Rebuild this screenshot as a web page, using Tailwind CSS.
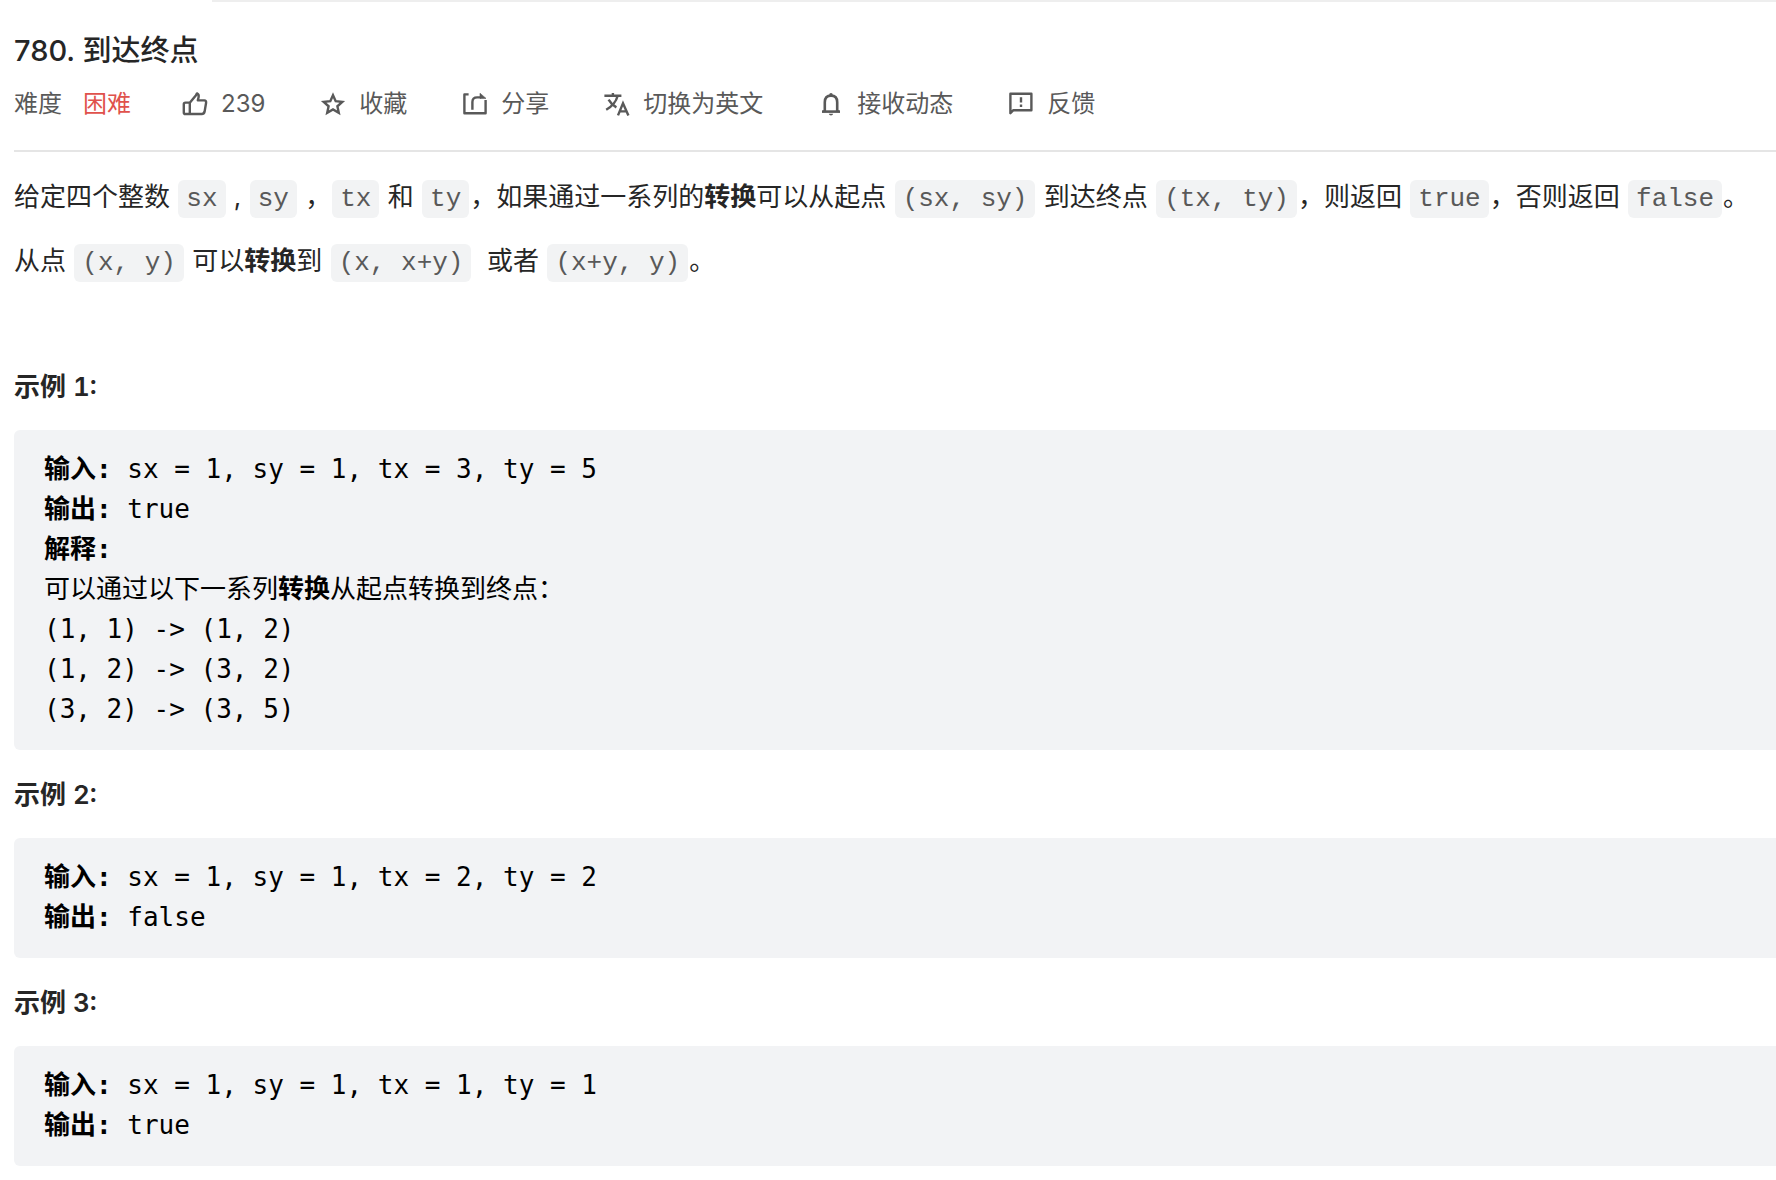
<!DOCTYPE html>
<html lang="zh-CN">
<head>
    <meta charset="UTF-8">
    <meta name="viewport" content="width=device-width, initial-scale=1.0">
    <title>780. 到达终点</title>
    <script src="https://cdn.jsdelivr.net/npm/@tailwindcss/browser@4"></script>
</head>
<body class="bg-white text-[#262626] font-[Inter,'Noto_Sans_CJK_SC',sans-serif]">
    <!-- Tab bar edge -->
    <div class="ml-[212px] h-0.5 bg-[#eeeeee]"></div>

    <main class="pl-3.5 pt-[31px]">
        <header class="border-b-2 border-[#e5e5e5] pb-8">
            <h1 class="text-[29px] leading-9 font-medium mb-[21px]">780. 到达终点</h1>

            <div class="flex items-center gap-[50px] text-2xl leading-7 text-[#595959] whitespace-nowrap">
                <div class="flex gap-[21px]">
                    <span>难度</span>
                    <span class="text-[#e0524c]">困难</span>
                </div>
                <div class="flex items-center gap-[54px]">
                    <button type="button" class="flex items-center gap-3">
                        <svg class="size-7" viewBox="0 0 28 28" fill="none" stroke="currentColor" stroke-width="2.4" stroke-linejoin="round">
                            <path d="M9 12.6 L15 5.2 L16 3.4 Q18.2 4.6 17.6 7.2 L16.8 10.4 H23.2 Q25.4 10.6 25.1 12.8 L23.6 21.6 Q23 24 20.8 24 H4.4 Q2.8 24 2.8 22.4 V14.2 Q2.8 12.6 4.4 12.6 Z"/>
                            <path d="M8.8 12.6 V24"/>
                        </svg>
                        <span>239</span>
                    </button>
                    <button type="button" class="flex items-center gap-3">
                        <svg class="size-7" viewBox="0 0 28 28" fill="none" stroke="currentColor" stroke-width="2.4" stroke-linejoin="miter">
                            <path d="M14 5.2 L16.7 11.2 L23.3 11.9 L18.4 16.3 L19.8 22.8 L14 19.5 L8.2 22.8 L9.6 16.3 L4.7 11.9 L11.3 11.2 Z"/>
                        </svg>
                        <span>收藏</span>
                    </button>
                    <button type="button" class="flex items-center gap-3">
                        <svg class="size-7" viewBox="0 0 28 28" fill="none" stroke="currentColor" stroke-width="2.4" stroke-linejoin="round">
                            <path d="M7.6 4.4 H3.4 V23.2 H24.6 V10"/>
                            <path d="M11.4 19.8 V12 Q11.4 7.4 16.2 7.4 H20"/>
                            <path d="M19 3.2 L25 8.4 H19 Z" fill="currentColor" stroke-width="0.6"/>
                        </svg>
                        <span>分享</span>
                    </button>
                    <button type="button" class="flex items-center gap-3">
                        <svg class="size-7" viewBox="0 0 28 28" fill="none" stroke="currentColor" stroke-width="2.4">
                            <path d="M1.4 5.8 H18.4 M9.9 3 V6"/>
                            <path d="M14.6 6 Q12.4 14.4 3.2 19.8 M5.6 9.6 Q8.4 14.6 13.4 17.4"/>
                            <path d="M15 25.4 L20 13.2 L25.4 25.4 M16.6 21.4 H23.8"/>
                        </svg>
                        <span>切换为英文</span>
                    </button>
                    <button type="button" class="flex items-center gap-3">
                        <svg class="size-7" viewBox="0 0 28 28" fill="none" stroke="currentColor" stroke-width="2.6">
                            <path d="M5 21.6 H23"/>
                            <path d="M7.8 21.4 V12.2 Q7.8 5.6 14 5.6 Q20.2 5.6 20.2 12.2 V21.4"/>
                            <path d="M5 22.6 L8 18.6 V22 Z M23 22.6 L20 18.6 V22 Z M12.2 5.2 Q12.2 3 14 3 Q15.8 3 15.8 5.2 Z M11.8 23.8 H16.2 Q15.8 25.4 14 25.4 Q12.2 25.4 11.8 23.8 Z" fill="currentColor" stroke="none"/>
                        </svg>
                        <span>接收动态</span>
                    </button>
                    <button type="button" class="flex items-center gap-3">
                        <svg class="size-7" viewBox="0 0 28 28" fill="none" stroke="currentColor" stroke-width="2.4" stroke-linejoin="round">
                            <path d="M3.4 23.2 V3.7 H24.4 V20.2 H6.4 Z"/>
                            <path d="M14 7.2 V12.4 M14 14.6 V17"/>
                        </svg>
                        <span>反馈</span>
                    </button>
                </div>
            </div>
        </header>

        <article class="pt-[26px] flex flex-col gap-[26px] text-[26px] leading-[34px]">
            <p class="pt-0.5">给定四个整数 <code class="mx-px px-2 py-1 rounded-md bg-[#f2f3f4] text-[#595959] font-['Liberation_Mono',monospace]">sx</code> , <code class="mx-px px-2 py-1 rounded-md bg-[#f2f3f4] text-[#595959] font-['Liberation_Mono',monospace]">sy</code> ，<code class="mx-px px-2 py-1 rounded-md bg-[#f2f3f4] text-[#595959] font-['Liberation_Mono',monospace]">tx</code> 和 <code class="mx-px px-2 py-1 rounded-md bg-[#f2f3f4] text-[#595959] font-['Liberation_Mono',monospace]">ty</code>，如果通过一系列的<strong>转换</strong>可以从起点 <code class="mx-px px-2 py-1 rounded-md bg-[#f2f3f4] text-[#595959] font-['Liberation_Mono',monospace]">(sx, sy)</code> 到达终点 <code class="mx-px px-2 py-1 rounded-md bg-[#f2f3f4] text-[#595959] font-['Liberation_Mono',monospace]">(tx, ty)</code>，则返回 <code class="mx-px px-2 py-1 rounded-md bg-[#f2f3f4] text-[#595959] font-['Liberation_Mono',monospace]">true</code>，否则返回 <code class="mx-px px-2 py-1 rounded-md bg-[#f2f3f4] text-[#595959] font-['Liberation_Mono',monospace]">false</code>。</p>
            <p class="pt-0.5">从点 <code class="mx-px px-2 py-1 rounded-md bg-[#f2f3f4] text-[#595959] font-['Liberation_Mono',monospace]">(x, y)</code> 可以<strong>转换</strong>到 <code class="mx-px px-2 py-1 rounded-md bg-[#f2f3f4] text-[#595959] font-['Liberation_Mono',monospace]">(x, x+y)</code>&nbsp; 或者 <code class="mx-px px-2 py-1 rounded-md bg-[#f2f3f4] text-[#595959] font-['Liberation_Mono',monospace]">(x+y, y)</code>。</p>
            <p class="pt-0.5">&nbsp;</p>

            <p class="pt-0.5 font-semibold tabular-nums">示例 1:</p>
            <pre class="bg-[#f2f3f5] text-black rounded-l-md px-[30px] pt-[19px] pb-[21px] leading-10 font-['DejaVu_Sans_Mono','Noto_Sans_CJK_SC',monospace]"><strong>输入:</strong> sx = 1, sy = 1, tx = 3, ty = 5
<strong>输出:</strong> true
<strong>解释:</strong>
可以通过以下一系列<strong>转换</strong>从起点转换到终点：
(1, 1) -&gt; (1, 2)
(1, 2) -&gt; (3, 2)
(3, 2) -&gt; (3, 5)
</pre>

            <p class="pt-0.5 font-semibold tabular-nums">示例 2:</p>
            <pre class="bg-[#f2f3f5] text-black rounded-l-md px-[30px] pt-[19px] pb-[21px] leading-10 font-['DejaVu_Sans_Mono','Noto_Sans_CJK_SC',monospace]"><strong>输入:</strong> sx = 1, sy = 1, tx = 2, ty = 2
<strong>输出:</strong> false
</pre>

            <p class="pt-0.5 font-semibold tabular-nums">示例 3:</p>
            <pre class="bg-[#f2f3f5] text-black rounded-l-md px-[30px] pt-[19px] pb-[21px] leading-10 font-['DejaVu_Sans_Mono','Noto_Sans_CJK_SC',monospace]"><strong>输入:</strong> sx = 1, sy = 1, tx = 1, ty = 1
<strong>输出:</strong> true
</pre>
        </article>
    </main>
</body>
</html>
